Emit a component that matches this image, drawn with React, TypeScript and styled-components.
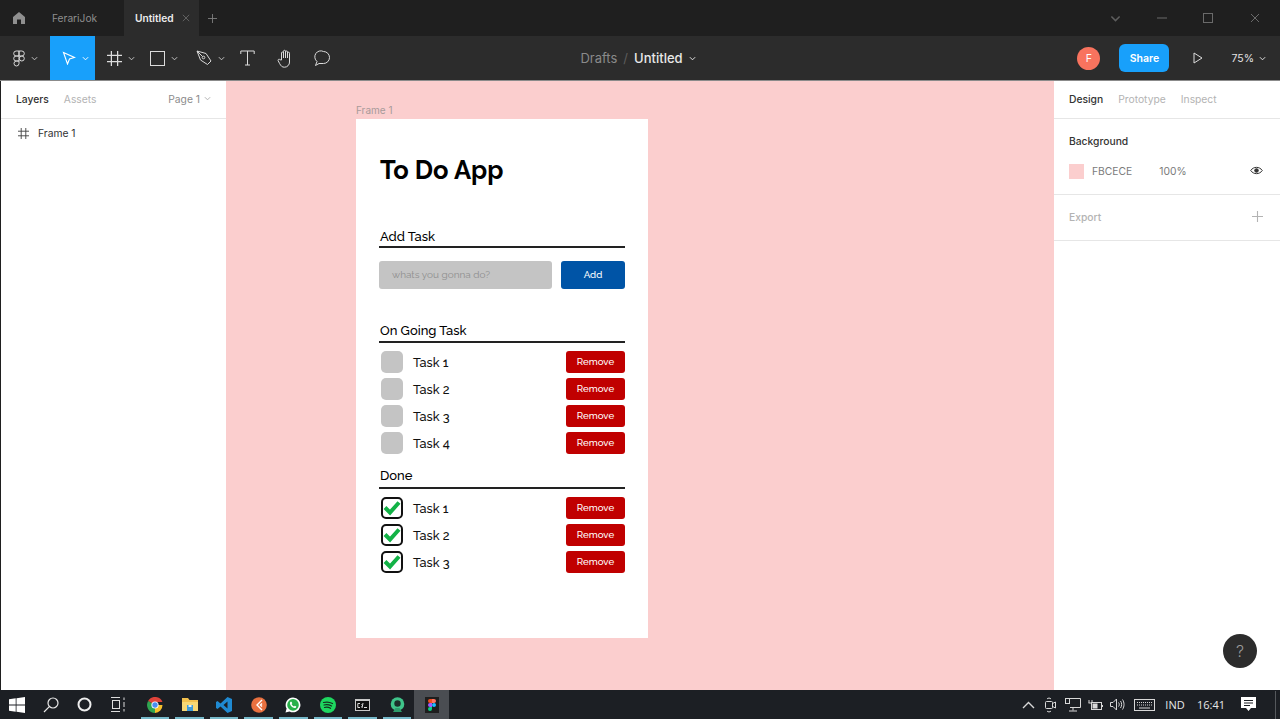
import * as React from 'react'
import styled, { createGlobalStyle } from 'styled-components'

const GlobalStyle = createGlobalStyle`
  html, body { margin: 0; padding: 0; height: 100%; overflow: hidden; background: #fff; }
  #root { height: 719px; }
  * { box-sizing: border-box; }
`

const Screen = styled.div`
  width: 1280px;
  height: 719px;
  display: flex;
  flex-direction: column;
  font-family: Inter, 'Liberation Sans', sans-serif;
  overflow: hidden;
`

/* ---------- title bar ---------- */
const TitleBar = styled.div`
  height: 36px;
  flex: none;
  background: #1f1f1f;
  display: flex;
  align-items: stretch;
  color: #8e8e8e;
  font-size: 10.2px;
`
const HomeSlot = styled.div`
  width: 38px;
  display: flex;
  align-items: center;
  justify-content: center;
`
const Tab = styled.div<{ $active?: boolean }>`
  display: flex;
  align-items: center;
  width: ${p => (p.$active ? 75 : 86)}px;
  padding-left: ${p => (p.$active ? 11 : 14)}px;
  background: ${p => (p.$active ? '#2c2c2c' : 'transparent')};
  color: ${p => (p.$active ? '#ececec' : '#8e8e8e')};
  font-weight: ${p => (p.$active ? 600 : 400)};
  gap: 8px;
`
const AddTab = styled.div`
  width: 26px;
  display: flex;
  align-items: center;
  justify-content: center;
`
const WindowControls = styled.div`
  margin-left: auto;
  display: flex;
  align-items: center;
  padding-right: 2px;
`
const WindowBtn = styled.div`
  width: 46.5px;
  display: flex;
  justify-content: center;
`

/* ---------- toolbar ---------- */
const Toolbar = styled.div`
  height: 45px;
  flex: none;
  background: #2c2c2c;
  border-bottom: 1px solid #8b8b8b;
  display: grid;
  grid-template-columns: 1fr auto 1fr;
`
const ToolGroup = styled.div`
  display: flex;
  align-items: stretch;
`
const Tool = styled.div<{ $w: number; $pad?: number; $active?: boolean }>`
  width: ${p => p.$w}px;
  padding-left: ${p => p.$pad ?? 0}px;
  display: flex;
  align-items: center;
  justify-content: ${p => (p.$pad === undefined ? 'center' : 'flex-start')};
  gap: 6px;
  background: ${p => (p.$active ? '#18a0fb' : 'transparent')};
`
const Crumbs = styled.div`
  display: flex;
  align-items: center;
  padding-right: 4px;
  font-size: 13px;
  color: #8a8a8a;
  gap: 6px;
`
const CrumbCurrent = styled.span`
  color: #e8e8e8;
  font-weight: 500;
`
const CrumbSlash = styled.span`
  color: #5c5c5c;
`
const RightTools = styled.div`
  display: flex;
  align-items: center;
  justify-content: flex-end;
`
const Avatar = styled.div`
  width: 23px;
  height: 23px;
  border-radius: 50%;
  background: #f8735e;
  color: #fff;
  font-size: 10.5px;
  display: flex;
  align-items: center;
  justify-content: center;
  margin-right: 19px;
`
const ShareButton = styled.div`
  width: 50px;
  height: 28px;
  border-radius: 6px;
  background: #18a0fb;
  color: #fff;
  font-size: 10.5px;
  font-weight: 600;
  display: flex;
  align-items: center;
  justify-content: center;
  margin-right: 24px;
`
const Zoom = styled.div`
  display: flex;
  align-items: center;
  gap: 5px;
  color: #e4e4e4;
  font-size: 10.5px;
  margin-left: 28px;
  margin-right: 14px;
`

/* ---------- workspace ---------- */
const Workspace = styled.div`
  flex: 1;
  min-height: 0;
  display: flex;
  border-left: 1px solid #1f1f1f;
`
const Panel = styled.div<{ $w: number }>`
  width: ${p => p.$w}px;
  flex: none;
  background: #fff;
  position: relative;
  font-size: 10.3px;
`
const PanelTabs = styled.div<{ $gap: number; $pad: number }>`
  height: 38px;
  border-bottom: 1px solid #e6e6e6;
  display: flex;
  align-items: center;
  gap: ${p => p.$gap}px;
  padding: 0 0 2px ${p => p.$pad}px;
`
const PanelTab = styled.span<{ $on?: boolean }>`
  color: ${p => (p.$on ? '#333' : '#b3b3b3')};
  font-weight: ${p => (p.$on ? 500 : 400)};
`
const PageSelect = styled.span`
  margin-left: auto;
  margin-right: 15px;
  color: #8c8c8c;
  display: flex;
  align-items: center;
  gap: 4px;
`
const LayerRow = styled.div`
  height: 28px;
  display: flex;
  align-items: center;
  gap: 9px;
  padding-left: 17px;
  color: #333;
`
const PropSection = styled.div<{ $h: number }>`
  height: ${p => p.$h}px;
  border-bottom: 1px solid #e6e6e6;
  padding: 0 17px 0 15px;
`
const PropHeading = styled.div<{ $muted?: boolean }>`
  height: 45px;
  padding-bottom: 2px;
  display: flex;
  align-items: center;
  justify-content: space-between;
  color: ${p => (p.$muted ? '#b3b3b3' : '#333')};
  font-weight: 500;
`
const BackgroundRow = styled.div`
  display: flex;
  align-items: center;
  color: #7a7a7a;
  height: 15px;
  padding-bottom: 2px;
`
const Swatch = styled.div`
  width: 15px;
  height: 15px;
  background: #fbcece;
  margin: 0 8px -2px 0;
`
const Percent = styled.span`
  margin-left: 27px;
`
const EyeSlot = styled.span`
  margin-left: auto;
  display: flex;
`
const HelpButton = styled.div`
  position: absolute;
  right: 23px;
  bottom: 22px;
  width: 34px;
  height: 34px;
  border-radius: 50%;
  background: #2c2c2c;
  color: #9a9a9a;
  display: flex;
  align-items: center;
  justify-content: center;
  font-size: 16px;
  font-weight: 300;
`

/* ---------- canvas + frame ---------- */
const Canvas = styled.div`
  flex: 1;
  background: #fbcece;
  position: relative;
`
const FrameLabel = styled.div`
  position: absolute;
  left: 130px;
  top: 23px;
  font-size: 10px;
  color: #a89a9a;
`
const Frame = styled.div`
  position: absolute;
  left: 130px;
  top: 38px;
  width: 292px;
  height: 519px;
  background: #fff;
  padding: 36px 23px 0;
  font-family: Raleway, Lato, 'Open Sans', sans-serif;
  color: #000;
`
const AppTitle = styled.h1`
  margin: 0 0 41px 1px;
  height: 30px;
  font-size: 25.5px;
  line-height: 30px;
  font-weight: 700;
  color: #000;
`
const SectionHead = styled.div<{ $top?: number; $lh?: number }>`
  height: 22px;
  margin-top: ${p => p.$top ?? 0}px;
  padding-left: 1px;
  border-bottom: 2px solid #222;
  font-size: 13px;
  line-height: ${p => p.$lh ?? 19}px;
  font-weight: 500;
`
const AddRow = styled.div`
  display: flex;
  gap: 9px;
  margin-top: 13px;
`
const TaskInput = styled.div`
  width: 173px;
  height: 28px;
  background: #c4c4c4;
  border-radius: 3px;
  padding-left: 13px;
  font-size: 10px;
  line-height: 28px;
  color: #8f8f8f;
`
const AddButton = styled.div`
  flex: 1;
  height: 28px;
  background: #0054a6;
  border-radius: 3px;
  color: #fff;
  font-size: 9.7px;
  font-weight: 500;
  line-height: 28px;
  text-align: center;
`
const TaskList = styled.div`
  display: flex;
  flex-direction: column;
  gap: 5px;
  margin-top: 8px;
`
const TaskRow = styled.div`
  height: 22px;
  display: flex;
  align-items: center;
  padding-left: 2px;
`
const CheckBox = styled.div<{ $done?: boolean }>`
  width: 22px;
  height: 22px;
  border-radius: 5px;
  background: ${p => (p.$done ? '#fff' : '#c4c4c4')};
  border: ${p => (p.$done ? '2px solid #111' : 'none')};
  display: flex;
  align-items: center;
  justify-content: center;
`
const TaskName = styled.span`
  margin-left: 10px;
  font-size: 12.7px;
  font-weight: 500;
  color: #111;
`
const RemoveButton = styled.div`
  margin-left: auto;
  width: 59px;
  height: 22px;
  border-radius: 3px;
  background: #c00000;
  color: #fff;
  font-size: 9.7px;
  font-weight: 500;
  line-height: 21px;
  text-align: center;
`

/* ---------- taskbar ---------- */
const Taskbar = styled.div`
  height: 29px;
  flex: none;
  background: #1c1f24;
  display: flex;
  align-items: stretch;
  color: #e8e8e8;
  font-size: 11px;
  font-family: 'Open Sans', 'Liberation Sans', sans-serif;
`
const BarSlot = styled.div<{ $w?: number }>`
  width: ${p => p.$w ?? 34}px;
  display: flex;
  align-items: center;
  justify-content: center;
`
const AppSlot = styled.div<{ $current?: boolean }>`
  position: relative;
  width: 34.6px;
  display: flex;
  align-items: center;
  justify-content: center;
  background: ${p => (p.$current ? '#4a4d52' : 'transparent')};
  &::after {
    content: '';
    position: absolute;
    left: 3px;
    right: 3px;
    bottom: 0;
    height: 2px;
    background: #76b9ca;
    opacity: ${p => (p.$current ? 0 : 1)};
  }
`
const Tray = styled.div`
  margin-left: auto;
  display: flex;
  align-items: stretch;
  padding-right: 4px;
`
const ShowDesktop = styled.div`
  width: 1px;
  margin: 1px 0 0 11px;
  background: #55585c;
`

/* ---------- icons ---------- */
const Svg = styled.svg`
  display: block;
  flex: none;
  fill: none;
`
const Chevron = ({ color = '#c8c8c8', size = 7 }: { color?: string; size?: number }) => (
  <Svg width={size} height={size} viewBox="0 0 8 8" stroke={color} strokeWidth="1.1">
    <path d="M1 2.5 4 5.5 7 2.5" />
  </Svg>
)
const Cross = ({ color, size }: { color: string; size: number }) => (
  <Svg width={size} height={size} viewBox="0 0 10 10" stroke={color} strokeWidth="1">
    <path d="M1 1 9 9M9 1 1 9" />
  </Svg>
)
const Plus = ({ color, size }: { color: string; size: number }) => (
  <Svg width={size} height={size} viewBox="0 0 10 10" stroke={color} strokeWidth="1">
    <path d="M5 0V10M0 5H10" />
  </Svg>
)
const Grid = ({ color, size }: { color: string; size: number }) => (
  <Svg width={size} height={size} viewBox="0 0 12 12" stroke={color} strokeWidth="1">
    <path d="M3.5 0V12M8.5 0V12M0 3.5H12M0 8.5H12" />
  </Svg>
)
const Check = () => (
  <Svg width="18" height="16" viewBox="0 0 18 16" stroke="#12b246" strokeWidth="4">
    <path d="M2 7.5 7 12.5 16 2.5" />
  </Svg>
)

const Home = () => (
  <Svg width="14" height="14" viewBox="0 0 14 14" style={{ fill: '#8f8f8f' }}>
    <path d="M7 1 13 6V13H9V8.5H5V13H1V6Z" />
  </Svg>
)
const FigmaMenu = () => (
  <Svg width="12" height="17" viewBox="0 0 12 17" stroke="#d8d8d8" strokeWidth="1">
    <path d="M6 1H3.2a2.5 2.5 0 0 0 0 5H6ZM6 1H8.8a2.5 2.5 0 0 1 0 5H6ZM6 6H3.2a2.5 2.5 0 0 0 0 5H6ZM6 11H3.2A2.5 2.5 0 1 0 6 13.5Z" />
    <circle cx="8.8" cy="8.5" r="2.5" />
  </Svg>
)
const MoveTool = () => (
  <Svg width="14" height="14" viewBox="0 0 14 14" stroke="#fff" strokeWidth="1.1">
    <path d="M1.5 1.5 12.5 6.5 7.5 8 5.5 13Z" />
  </Svg>
)
const RectTool = () => (
  <Svg width="15" height="15" viewBox="0 0 15 15" stroke="#dcdcdc" strokeWidth="1">
    <rect x=".5" y=".5" width="14" height="14" />
  </Svg>
)
const PenTool = () => (
  <Svg width="16" height="16" viewBox="0 0 16 16" stroke="#d8d8d8" strokeWidth="1">
    <path d="M1 1 10 3.5 15 11 11.5 14.5 4.5 10 1 1ZM1 1 6.5 6.5" />
    <circle cx="7.5" cy="7.5" r="1.3" />
  </Svg>
)
const TextTool = () => (
  <Svg width="15" height="16" viewBox="0 0 15 16" stroke="#dcdcdc" strokeWidth="1">
    <path d="M.8 4V1H14.2V4M7.5 1V15M5 15H10" />
  </Svg>
)
const HandTool = () => (
  <Svg width="17" height="19" viewBox="0 0 17 19" stroke="#dcdcdc" strokeWidth="1">
    <path d="M4.5 11V4a1 1 0 0 1 2 0V2.3a1 1 0 0 1 2 0V3a1 1 0 0 1 2 0v1.2a1 1 0 0 1 2 0V13a5 5 0 0 1-5 5.2C5 18.2 4 17 2.6 14.5L1.2 11.8c-.7-1.2 1-2.2 1.8-1ZM6.5 4V9M8.5 3V9M10.5 4V9" />
  </Svg>
)
const CommentTool = () => (
  <Svg width="17" height="17" viewBox="0 0 17 17" stroke="#dcdcdc" strokeWidth="1">
    <path d="M9.5 1.5a6 6 0 0 1 0 12H5L1.5 15.5 3 11.5A6 6 0 0 1 9.5 1.5Z" />
  </Svg>
)
const PlayIcon = () => (
  <Svg width="10" height="12" viewBox="0 0 10 12" stroke="#dcdcdc" strokeWidth="1">
    <path d="M1 1 9 6 1 11Z" />
  </Svg>
)
const Eye = () => (
  <Svg width="13" height="9" viewBox="0 0 13 9" stroke="#333" strokeWidth="1">
    <path d="M.7 4.5C3.5.3 9.5.3 12.3 4.5 9.5 8.7 3.5 8.7.7 4.5Z" />
    <circle cx="6.5" cy="4.5" r="1.8" style={{ fill: '#333' }} />
  </Svg>
)

const WindowsLogo = () => (
  <Svg width="16" height="16" viewBox="0 0 16 16" style={{ fill: '#fff' }}>
    <path d="M0 2.3 6.7 1.3V7.6H0ZM7.5 1.2 16 0V7.6H7.5ZM0 8.4H6.7V14.7L0 13.7ZM7.5 8.4H16V16L7.5 14.8Z" />
  </Svg>
)
const SearchIcon = () => (
  <Svg width="16" height="16" viewBox="0 0 16 16" stroke="#e8e8e8" strokeWidth="1.2">
    <circle cx="10" cy="6" r="5" />
    <path d="M6.3 9.7 1 15" />
  </Svg>
)
const CortanaIcon = () => (
  <Svg width="15" height="15" viewBox="0 0 15 15" stroke="#eee" strokeWidth="2">
    <circle cx="7.5" cy="7.5" r="6" />
  </Svg>
)
const TaskView = () => (
  <Svg width="16" height="15" viewBox="0 0 16 15" stroke="#ddd" strokeWidth="1">
    <path d="M1 .5H10M1 14.5H10M14 .5V3M14 5V10M14 12V14.5" />
    <rect x="2.5" y="3.5" width="7" height="8" />
  </Svg>
)
const Chrome = () => (
  <Svg width="16" height="16" viewBox="0 0 16 16">
    <path d="M8 8 1.1 4A8 8 0 0 1 15.5 5H8Z" style={{ fill: '#e0433a' }} />
    <path d="M8 8H15.5A8 8 0 0 1 8 16Z" style={{ fill: '#f6c02c' }} />
    <path d="M8 8V16A8 8 0 0 1 1.1 4Z" style={{ fill: '#2fa450' }} />
    <circle cx="8" cy="8" r="3.6" style={{ fill: '#fff' }} />
    <circle cx="8" cy="8" r="2.7" style={{ fill: '#4a8df0' }} />
  </Svg>
)
const Folder = () => (
  <Svg width="16" height="15" viewBox="0 0 16 15">
    <path d="M0 1H6L7.5 3H16V14H0Z" style={{ fill: '#f2c14e' }} />
    <path d="M0 5H16V14H0Z" style={{ fill: '#f7d774' }} />
    <path d="M5 8H11V14H5Z" style={{ fill: '#3e9bd8' }} />
    <path d="M6.5 8H9.5V10H6.5Z" style={{ fill: '#dfeef8' }} />
  </Svg>
)
const VsCode = () => (
  <Svg width="16" height="16" viewBox="0 0 16 16">
    <path d="M11.5 0 16 2V14L11.5 16 4.5 9.5 1.5 12 0 11V5L1.5 4 4.5 6.5ZM11.5 4.5 7.500 8 11.5 11.500Z" style={{ fill: '#1f8ad2' }} />
  </Svg>
)
const OrangeApp = () => (
  <Svg width="16" height="16" viewBox="0 0 16 16">
    <circle cx="8" cy="8" r="7.8" style={{ fill: '#e8703f' }} />
    <path d="M11 3 6 8 11 13M11 6.5 9.5 8 11 9.5" stroke="#fff" strokeWidth="1.4" />
  </Svg>
)
const WhatsApp = () => (
  <Svg width="16" height="16" viewBox="0 0 16 16">
    <path d="M8 .5A7.4 7.4 0 0 0 1.6 11.6L.5 15.5 4.5 14.4A7.4 7.4 0 1 0 8 .5Z" style={{ fill: '#fff' }} />
    <circle cx="8" cy="7.9" r="5.8" style={{ fill: '#29b04a' }} />
    <path d="M5.5 4.8C4.5 6 4.8 7.6 6.3 9.3 8 11 9.8 11.5 11 10.5L11.3 9.5 9.8 8.7 9 9.4C8 9 7 8 6.6 7L7.3 6.2 6.5 4.7Z" style={{ fill: '#fff' }} />
  </Svg>
)
const Spotify = () => (
  <Svg width="16" height="16" viewBox="0 0 16 16">
    <circle cx="8" cy="8" r="8" style={{ fill: '#1ed760' }} />
    <path d="M3.5 5.5C6.5 4.7 9.8 5 12.5 6.5M4 8C6.5 7.4 9.2 7.7 11.5 9M4.500 10.500C6.500 10 8.800 10.200 10.500 11.300" stroke="#15301f" strokeWidth="1.2" strokeLinecap="round" />
  </Svg>
)
const Cmd = () => (
  <Svg width="15" height="12" viewBox="0 0 15 12">
    <rect width="15" height="12" style={{ fill: '#c9c9c9' }} />
    <rect x="1" y="2" width="13" height="9" style={{ fill: '#111' }} />
    <path d="M5 4.5H2.8V8.5H5M6.5 5.5V6M6.5 7.5V8M8 4 7 9M9 8.5H12" stroke="#ddd" strokeWidth="1" />
  </Svg>
)
const GreenApp = () => (
  <Svg width="15" height="16" viewBox="0 0 15 16">
    <circle cx="7.5" cy="7" r="6.8" style={{ fill: '#3fc48a' }} />
    <circle cx="7.5" cy="6.5" r="3.2" style={{ fill: '#1c2f2a' }} />
    <path d="M3 15 5.5 11H9.5L12 15Z" style={{ fill: '#2d9d6c' }} />
  </Svg>
)
const FigmaApp = () => (
  <Svg width="14" height="16" viewBox="0 0 14 16">
    <rect width="14" height="16" style={{ fill: '#1e1e1e' }} />
    <path d="M7 2H5A2 2 0 0 0 5 6H7Z" style={{ fill: '#f24e1e' }} />
    <path d="M7 2H9A2 2 0 0 1 9 6H7Z" style={{ fill: '#ff7262' }} />
    <path d="M7 6H5A2 2 0 0 0 5 10H7Z" style={{ fill: '#a259ff' }} />
    <circle cx="9" cy="8" r="2" style={{ fill: '#1abcfe' }} />
    <path d="M7 10H5A2 2 0 1 0 7 12Z" style={{ fill: '#0acf83' }} />
  </Svg>
)
const TrayStroke = styled(Svg)`
  stroke: #d8d8d8;
  stroke-width: 1;
`
const ChevronUp = () => (
  <TrayStroke width="13" height="8" viewBox="0 0 13 8" style={{ strokeWidth: 1.4 }}>
    <path d="M1 7 6.5 1.5 12 7" />
  </TrayStroke>
)
const MeetIcon = () => (
  <TrayStroke width="11" height="16" viewBox="0 0 11 16">
    <path d="M2 2C3 .8 5 .8 6 2M2 14C3 15.2 5 15.2 6 14" />
    <rect x=".5" y="4.5" width="7" height="7" rx="1" />
    <path d="M7.5 6.5 10.5 5V11L7.5 9.5" />
  </TrayStroke>
)
const NetworkIcon = () => (
  <TrayStroke width="16" height="14" viewBox="0 0 16 14">
    <path d="M3 .5H15.5V9.5H5M8 9.5V12.5M4 13H12" />
    <rect x=".5" y=".5" width="4" height="5" />
  </TrayStroke>
)
const BatteryIcon = () => (
  <TrayStroke width="15" height="12" viewBox="0 0 15 12">
    <rect x="3.5" y="3.5" width="10" height="7" />
    <path d="M14.5 6V8M1 1V4M4 1V3M.5 4H4" />
    <rect x="5" y="5" width="4" height="4" style={{ fill: '#d8d8d8' }} />
  </TrayStroke>
)
const VolumeIcon = () => (
  <TrayStroke width="15" height="13" viewBox="0 0 15 13">
    <path d="M.5 4.5H3L6.5 1V12L3 8.5H.5ZM8.5 4.5C9.5 5.5 9.5 7.5 8.5 8.5M10.5 3C12 5 12 8 10.5 10M12.5 1.5C14.5 4.5 14.5 8.5 12.5 11.5" />
  </TrayStroke>
)
const KeyboardIcon = () => (
  <TrayStroke width="21" height="12" viewBox="0 0 21 12">
    <rect x=".5" y=".5" width="20" height="11" />
    <path d="M3 3.5H18M3 6H18" strokeDasharray="1 1" />
    <path d="M5 9H16" />
  </TrayStroke>
)
const NotifyIcon = () => (
  <Svg width="15" height="15" viewBox="0 0 15 15">
    <path d="M0 0H15V11H10L7.5 14 5 11H0Z" style={{ fill: '#fff' }} />
    <path d="M3 3.5H12M3 6H12M3 8.5H9" stroke="#1c1f24" strokeWidth="1" />
  </Svg>
)

const ongoing = ['Task 1', 'Task 2', 'Task 3', 'Task 4']
const done = ['Task 1', 'Task 2', 'Task 3']
const taskbarApps = [Chrome, Folder, VsCode, OrangeApp, WhatsApp, Spotify, Cmd, GreenApp]

const Task: React.FC<{ name: string; isDone?: boolean }> = ({ name, isDone }) => (
  <TaskRow>
    <CheckBox $done={isDone}>{isDone && <Check />}</CheckBox>
    <TaskName>{name}</TaskName>
    <RemoveButton>Remove</RemoveButton>
  </TaskRow>
)

export default function App() {
  return (
    <Screen>
      <GlobalStyle />
      <TitleBar>
        <HomeSlot>
          <Home />
        </HomeSlot>
        <Tab>FerariJok</Tab>
        <Tab $active>
          Untitled
          <Cross color="#6f6f6f" size={8} />
        </Tab>
        <AddTab>
          <Plus color="#7e7e7e" size={9} />
        </AddTab>
        <WindowControls>
          <WindowBtn>
            <Chevron color="#5e5e5e" size={11} />
          </WindowBtn>
          <WindowBtn>
            <Svg width="10" height="2" viewBox="0 0 10 2" stroke="#6a6a6a">
              <path d="M0 1H10" />
            </Svg>
          </WindowBtn>
          <WindowBtn>
            <Svg width="10" height="10" viewBox="0 0 10 10" stroke="#6a6a6a">
              <rect x=".5" y=".5" width="9" height="9" />
            </Svg>
          </WindowBtn>
          <WindowBtn>
            <Cross color="#6a6a6a" size={10} />
          </WindowBtn>
        </WindowControls>
      </TitleBar>

      <Toolbar>
        <ToolGroup>
          <Tool $w={50} $pad={13}>
            <FigmaMenu />
            <Chevron />
          </Tool>
          <Tool $w={45} $active $pad={12}>
            <MoveTool />
            <Chevron color="#fff" />
          </Tool>
          <Tool $w={45} $pad={12}>
            <Grid color="#dcdcdc" size={15} />
            <Chevron />
          </Tool>
          <Tool $w={46} $pad={10}>
            <RectTool />
            <Chevron />
          </Tool>
          <Tool $w={43} $pad={10}>
            <PenTool />
            <Chevron />
          </Tool>
          <Tool $w={37}>
            <TextTool />
          </Tool>
          <Tool $w={38}>
            <HandTool />
          </Tool>
          <Tool $w={37}>
            <CommentTool />
          </Tool>
        </ToolGroup>
        <Crumbs>
          Drafts
          <CrumbSlash>/</CrumbSlash>
          <CrumbCurrent>Untitled</CrumbCurrent>
          <Chevron color="#e8e8e8" />
        </Crumbs>
        <RightTools>
          <Avatar>F</Avatar>
          <ShareButton>Share</ShareButton>
          <PlayIcon />
          <Zoom>
            75%
            <Chevron color="#e4e4e4" />
          </Zoom>
        </RightTools>
      </Toolbar>

      <Workspace>
        <Panel $w={225}>
          <PanelTabs $gap={15} $pad={15}>
            <PanelTab $on>Layers</PanelTab>
            <PanelTab>Assets</PanelTab>
            <PageSelect>
              Page 1 <Chevron color="#b0b0b0" />
            </PageSelect>
          </PanelTabs>
          <LayerRow>
            <Grid color="#444" size={11} />
            Frame 1
          </LayerRow>
        </Panel>

        <Canvas>
          <FrameLabel>Frame 1</FrameLabel>
          <Frame>
            <AppTitle>To Do App</AppTitle>
            <SectionHead $lh={21}>Add Task</SectionHead>
            <AddRow>
              <TaskInput>whats you gonna do?</TaskInput>
              <AddButton>Add</AddButton>
            </AddRow>
            <SectionHead $top={32}>On Going Task</SectionHead>
            <TaskList>
              {ongoing.map(name => (
                <Task key={name} name={name} />
              ))}
            </TaskList>
            <SectionHead $top={13} $lh={17}>
              Done
            </SectionHead>
            <TaskList>
              {done.map(name => (
                <Task key={name} name={name} isDone />
              ))}
            </TaskList>
          </Frame>
        </Canvas>

        <Panel $w={226}>
          <PanelTabs $gap={15} $pad={15}>
            <PanelTab $on>Design</PanelTab>
            <PanelTab>Prototype</PanelTab>
            <PanelTab>Inspect</PanelTab>
          </PanelTabs>
          <PropSection $h={76}>
            <PropHeading>Background</PropHeading>
            <BackgroundRow>
              <Swatch />
              FBCECE
              <Percent>100%</Percent>
              <EyeSlot>
                <Eye />
              </EyeSlot>
            </BackgroundRow>
          </PropSection>
          <PropSection $h={46}>
            <PropHeading $muted>
              Export
              <Plus color="#b3b3b3" size={11} />
            </PropHeading>
          </PropSection>
          <HelpButton>?</HelpButton>
        </Panel>
      </Workspace>

      <Taskbar>
        <BarSlot>
          <WindowsLogo />
        </BarSlot>
        <BarSlot>
          <SearchIcon />
        </BarSlot>
        <BarSlot $w={33}>
          <CortanaIcon />
        </BarSlot>
        <BarSlot>
          <TaskView />
        </BarSlot>
        <BarSlot $w={2.7} />
        {taskbarApps.map((Icon, i) => (
          <AppSlot key={i}>
            <Icon />
          </AppSlot>
        ))}
        <AppSlot $current>
          <FigmaApp />
        </AppSlot>
        <Tray>
          <BarSlot $w={22}>
            <ChevronUp />
          </BarSlot>
          <BarSlot $w={22}>
            <MeetIcon />
          </BarSlot>
          <BarSlot $w={23}>
            <NetworkIcon />
          </BarSlot>
          <BarSlot $w={22}>
            <BatteryIcon />
          </BarSlot>
          <BarSlot $w={22}>
            <VolumeIcon />
          </BarSlot>
          <BarSlot $w={32}>
            <KeyboardIcon />
          </BarSlot>
          <BarSlot $w={30}>IND</BarSlot>
          <BarSlot $w={42}>16:41</BarSlot>
          <BarSlot $w={32}>
            <NotifyIcon />
          </BarSlot>
          <ShowDesktop />
        </Tray>
      </Taskbar>
    </Screen>
  )
}
